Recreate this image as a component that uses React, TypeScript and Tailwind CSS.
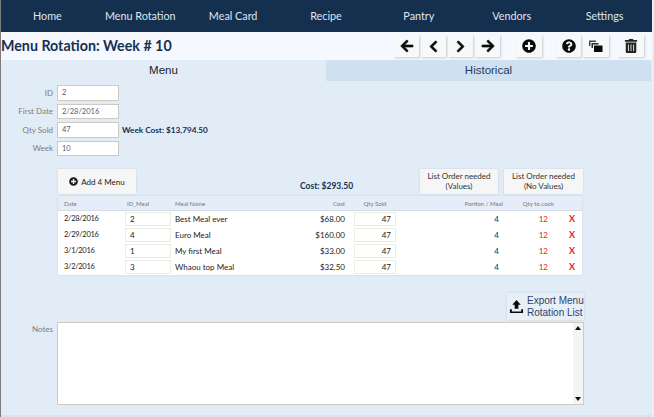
import { FaArrowLeft, FaArrowRight, FaChevronLeft, FaChevronRight, FaPlusCircle, FaQuestionCircle, FaTrashAlt } from 'react-icons/fa'
import type { ReactNode } from 'react'

const navItems = ['Home', 'Menu Rotation', 'Meal Card', 'Recipe', 'Pantry', 'Vendors', 'Settings']

const meals = [
  { date: '2/28/2016', id: '2', name: 'Best Meal ever', cost: '$68.00' },
  { date: '2/29/2016', id: '4', name: 'Euro Meal', cost: '$160.00' },
  { date: '3/1/2016', id: '1', name: 'My first Meal', cost: '$33.00' },
  { date: '3/2/2016', id: '3', name: 'Whaou top Meal', cost: '$32.50' },
]

const fields = [
  { label: 'ID', value: '2' },
  { label: 'First Date', value: '2/28/2016' },
  { label: 'Qty Sold', value: '47' },
  { label: 'Week', value: '10' },
]

const rowGrid = 'grid grid-cols-[67px_50px_120px_50px_9px_42px_107px_51px_22px_6px] items-center'

function ToolButton({ children, className = '' }: { children: ReactNode; className?: string }) {
  return (
    <div className={`flex h-[22px] w-[25px] items-center justify-center bg-[#f7f8fa] shadow-[1px_1px_2px_rgba(0,0,0,0.18)] text-[#0a0a0a] ${className}`}>
      {children}
    </div>
  )
}

function CopyIcon() {
  return (
    <svg viewBox="0 0 14 14" className="h-[14px] w-[14px]" fill="currentColor">
      <path d="M0 1.5h7v1.5H1.5v4H0z" opacity="0.75" />
      <path d="M2.5 4h7v1.5H4v3.5H2.5z" opacity="0.85" />
      <rect x="5" y="6.5" width="8.5" height="6.5" />
    </svg>
  )
}

function UploadIcon() {
  return (
    <svg viewBox="0 0 16 16" className="h-[15px] w-[15px] shrink-0" fill="#0a0a0a">
      <path d="M8 1 12.5 6H10v4.5H6V6H3.5z" />
      <path d="M1 11h2v2.2h10V11h2v4H1z" />
    </svg>
  )
}

export default function App() {
  return (
    <div className="flex h-[417px] w-[654px] flex-col overflow-hidden border-l border-r-2 border-l-[#7d7d7d] border-r-[#e9eef5] bg-[#e2ecf7] font-['Lato','Open_Sans',sans-serif]">
      <nav className="grid h-[32px] shrink-0 grid-cols-7 items-center bg-[#15304f] pr-[1px]">
        {navItems.map((item) => (
          <div key={item} className="text-center text-[10.8px] text-[#dfe6ee]">
            {item}
          </div>
        ))}
      </nav>

      <header className="flex h-[28px] shrink-0 items-center justify-between bg-[#f5f8fe] pr-[8px]">
        <h1 className="text-[14.25px] font-bold text-[#15304f]">Menu Rotation: Week # 10</h1>
        <div className="flex items-center gap-[2px]">
          <ToolButton><FaArrowLeft size={14} stroke="currentColor" strokeWidth={20} /></ToolButton>
          <ToolButton className="w-[24px]"><FaChevronLeft size={13} stroke="currentColor" strokeWidth={30} /></ToolButton>
          <ToolButton className="w-[24px]"><FaChevronRight size={13} stroke="currentColor" strokeWidth={30} /></ToolButton>
          <ToolButton><FaArrowRight size={14} stroke="currentColor" strokeWidth={20} /></ToolButton>
          <ToolButton className="ml-[14px] w-[26px]"><FaPlusCircle size={14} /></ToolButton>
          <ToolButton className="ml-[12px]"><FaQuestionCircle size={14} /></ToolButton>
          <ToolButton className="w-[26px]"><CopyIcon /></ToolButton>
          <ToolButton className="ml-[7px] w-[26px]"><span className="text-[#222]"><FaTrashAlt size={14} /></span></ToolButton>
        </div>
      </header>

      <div className="grid h-[21px] shrink-0 grid-cols-[325px_325px] items-center font-['Liberation_Sans',sans-serif] text-[11.5px] text-[#1b1b1b]">
        <div className="flex h-full items-center justify-center">Menu</div>
        <div className="flex h-full items-center justify-center rounded-t-[3px] bg-[#cfe0f0] text-[#1f3c5c]">Historical</div>
      </div>

      <section className="mt-[4px] flex flex-col gap-[3px]">
        {fields.map((field) => (
          <div key={field.label} className="flex h-[15.5px] items-center">
            <label className="w-[52px] text-right text-[8px] text-[#7c7c7c]">{field.label}</label>
            <div className="ml-[4px] flex h-full w-[62px] items-center border border-[#cdcbbf] bg-white pl-[4px] text-[7.5px] text-[#4f5b86]">
              {field.value}
            </div>
            {field.label === 'Qty Sold' && (
              <span className="ml-[3px] text-[8.2px] font-bold text-[#15304f]">Week Cost: $13,794.50</span>
            )}
          </div>
        ))}
      </section>

      <section className="ml-[57px] mt-[13px] w-[525px]">
        <div className="flex h-[25px] items-end">
          <div className="flex h-[25px] w-[78px] items-center justify-center gap-[3px] rounded-[1px] bg-[#f6f6f6] text-[8px] text-[#1b1b1b] shadow-[0_0_2px_rgba(0,0,0,0.15)]">
            <FaPlusCircle size={9} />
            Add 4 Menu
          </div>
          <span className="ml-[164px] pb-[1px] text-[8.5px] font-bold text-[#15304f]">Cost: $293.50</span>
          <div className="ml-auto flex gap-[6px]">
            <div className="flex h-[25px] w-[78px] items-center justify-center rounded-[1px] bg-[#f6f6f6] text-center text-[8px] leading-[9.5px] text-[#333] shadow-[0_0_2px_rgba(0,0,0,0.15)]">
              List Order needed<br />(Values)
            </div>
            <div className="flex h-[25px] w-[79px] items-center justify-center rounded-[1px] bg-[#f6f6f6] text-center text-[8px] leading-[9.5px] text-[#333] shadow-[0_0_2px_rgba(0,0,0,0.15)]">
              List Order needed<br />(No Values)
            </div>
          </div>
        </div>

        <div className="mt-[2px] w-[524px] shadow-[0_0_2px_rgba(0,0,0,0.1)]">
          <div className={`${rowGrid} h-[15px] border-b border-[#d6dde6] bg-[#e4edf8] text-[6px] text-[#77797e]`}>
            <span className="pl-[6px]">Date</span>
            <span className="pl-[2px]">ID_Meal</span>
            <span>Meal Name</span>
            <span className="text-right">Cost</span>
            <span />
            <span className="text-center">Qty Sold</span>
            <span className="text-right">Portion / Meal</span>
            <span className="text-right">Qty to cook</span>
            <span />
            <span />
          </div>
          {meals.map((meal) => (
            <div key={meal.date} className={`${rowGrid} h-[16px] bg-white text-[8px] text-[#222]`}>
              <span className="pl-[6px] text-[7.5px] tracking-[-0.3px]">{meal.date}</span>
              <div className="flex h-[14px] w-[46px] items-center border border-[#e8eee0] pl-[4px]">{meal.id}</div>
              <span>{meal.name}</span>
              <span className="text-right">{meal.cost}</span>
              <span />
              <div className="flex h-[14px] items-center justify-end border border-[#e8eee0] pr-[4px]">47</div>
              <span className="pr-[4px] text-right text-[#15304f]">4</span>
              <span className="pr-[6px] text-right text-[#f01818]">12</span>
              <span className="pl-[15px] text-[9px] font-bold text-[#f01818]">X</span>
              <span />
            </div>
          ))}
        </div>
      </section>

      <div className="mr-[68px] mt-[18px] flex justify-end">
        <div className="flex h-[27px] w-[77px] items-center gap-[3px] bg-[#e9eff7] pl-[2px] font-['Liberation_Sans',sans-serif] text-[10px] leading-[12px] text-[#2c4468] shadow-[0_0_2px_rgba(0,0,0,0.12)]">
          <UploadIcon />
          <div className="whitespace-nowrap">Export Menu<br />Rotation List</div>
        </div>
      </div>

      <div className="mt-[2px] flex">
        <label className="w-[52px] pt-[1px] text-right text-[8px] text-[#7c7c7c]">Notes</label>
        <div className="ml-[4px] flex h-[83px] w-[527px] border border-[#cdcbbf] bg-white">
          <div className="flex-1" />
          <div className="flex w-[10px] flex-col items-center justify-between bg-[#f4f4f4] py-[3px]">
            <svg viewBox="0 0 6 4" className="h-[4px] w-[6px]" fill="#111"><path d="M3 0 6 4H0z" /></svg>
            <svg viewBox="0 0 6 4" className="h-[4px] w-[6px]" fill="#111"><path d="M0 0h6L3 4z" /></svg>
          </div>
        </div>
      </div>

      <div className="mt-auto h-[2px] bg-[#d9e3ef]" />
    </div>
  )
}
